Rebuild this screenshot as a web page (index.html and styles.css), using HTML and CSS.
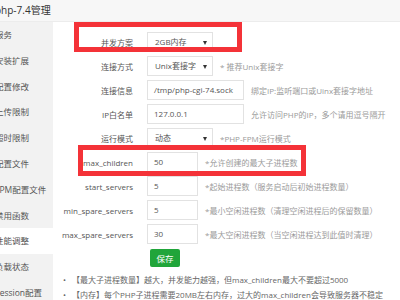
FILE: index.html
```html
<!DOCTYPE html>
<html lang="zh-CN">

<head>
    <meta charset="UTF-8">
    <title>php-7.4管理</title>
    <link rel="stylesheet" href="styles.css">
</head>

<body>
    <div class="title">php-7.4管理</div>

    <div class="main">
        <ul class="side">
            <li>服务</li>
            <li>安装扩展</li>
            <li>配置修改</li>
            <li>上传限制</li>
            <li>超时限制</li>
            <li>配置文件</li>
            <li>FPM配置文件</li>
            <li>禁用函数</li>
            <li class="on">性能调整</li>
            <li>负载状态</li>
            <li>Session配置</li>
        </ul>

        <div class="content">
            <div class="row">
                <span class="label">并发方案</span>
                <div class="field select w66">2GB内存</div>
            </div>
            <div class="row">
                <span class="label">连接方式</span>
                <div class="field select w66">Unix套接字</div>
                <span class="hint">* 推荐Unix套接字</span>
            </div>
            <div class="row">
                <span class="label">连接信息</span>
                <div class="field w97">/tmp/php-cgi-74.sock</div>
                <span class="hint">绑定IP:监听端口或Uinx套接字地址</span>
            </div>
            <div class="row">
                <span class="label">IP白名单</span>
                <div class="field w97">127.0.0.1</div>
                <span class="hint">允许访问PHP的IP，多个请用逗号隔开</span>
            </div>
            <div class="row">
                <span class="label">运行模式</span>
                <div class="field select w66">动态</div>
                <span class="hint">*PHP-FPM运行模式</span>
            </div>
            <div class="row">
                <span class="label">max_children</span>
                <div class="field w51">50</div>
                <span class="hint">*允许创建的最大子进程数</span>
            </div>
            <div class="row">
                <span class="label">start_servers</span>
                <div class="field w51">5</div>
                <span class="hint">*起始进程数（服务启动后初始进程数量）</span>
            </div>
            <div class="row">
                <span class="label">min_spare_servers</span>
                <div class="field w51">5</div>
                <span class="hint">*最小空闲进程数（清理空闲进程后的保留数量）</span>
            </div>
            <div class="row">
                <span class="label">max_spare_servers</span>
                <div class="field w51">30</div>
                <span class="hint">*最大空闲进程数（当空闲进程达到此值时清理）</span>
            </div>
            <div class="row">
                <span class="label"></span>
                <button class="save">保存</button>
            </div>

            <ul class="tips">
                <li>【最大子进程数量】越大，并发能力越强，但max_children最大不要超过5000</li>
                <li>【内存】每个PHP子进程需要20MB左右内存，过大的max_children会导致服务器不稳定</li>
            </ul>
        </div>
    </div>

    <!-- red annotation boxes -->
    <div class="mark mark-plan"></div>
    <div class="mark mark-children"></div>
</body>

</html>
```

FILE: styles.css
```css
body {
    margin: 0;
    width: 400px;
    height: 300px;
    overflow: hidden;
    position: relative;
    background: #fff;
    font-family: "Open Sans", "Noto Sans CJK SC", sans-serif;
    font-size: 8px;
    color: #555;
}

.title {
    height: 21px;
    line-height: 21px;
    background: #f7f7f7;
    border-bottom: 1px solid #ececec;
    font-size: 10px;
    color: #333;
    text-indent: -5px;
    white-space: nowrap;
}

.main {
    display: flex;
    height: 278px;
}

.side {
    margin: 0;
    padding: 0;
    list-style: none;
    width: 53px;
    flex: none;
    background: #f2f2f2;
    font-size: 8.5px;
    color: #555;
}

.side li {
    height: 25.8px;
    line-height: 25.8px;
    text-indent: -5px;
    white-space: nowrap;
    overflow: hidden;
}

.side li.on {
    background: #fff;
}

.content {
    flex: 1;
    padding-top: 10px;
}

.row {
    display: flex;
    align-items: center;
    height: 20px;
    margin-bottom: 4px;
}

.label {
    width: 80px;
    flex: none;
    text-align: right;
    margin-right: 14px;
    white-space: nowrap;
}

.field {
    height: 20px;
    box-sizing: border-box;
    border: 1px solid #e2e2e2;
    padding-left: 6px;
    line-height: 18px;
    white-space: nowrap;
    overflow: hidden;
}

.w51 {
    width: 51px;
}

.w66 {
    width: 66px;
}

.w97 {
    width: 97px;
}

.select {
    position: relative;
    padding-left: 7px;
}

.select::after {
    content: "";
    position: absolute;
    right: 5px;
    top: 8px;
    border-left: 2px solid transparent;
    border-right: 2px solid transparent;
    border-top: 4px solid #333;
}

.hint {
    margin-left: 7px;
    color: #9a9a9a;
    white-space: nowrap;
}

.save {
    margin-left: 3px;
    width: 30px;
    height: 18px;
    padding: 0;
    border: 0;
    border-radius: 2px;
    background: #20a53a;
    color: #fff;
    font-family: inherit;
    font-size: 8.5px;
}

.tips {
    margin: 0;
    padding: 0;
    list-style: none;
    color: #666;
    line-height: 15px;
}

.tips li {
    display: flex;
    white-space: nowrap;
}

.tips li::before {
    content: "•";
    flex: none;
    width: 9px;
    margin-left: 10px;
}

.mark {
    position: absolute;
    box-sizing: border-box;
    border: 5px solid #f43238;
}

.mark-plan {
    left: 74px;
    top: 22px;
    width: 168px;
    height: 30px;
}

.mark-children {
    left: 78px;
    top: 145px;
    width: 228px;
    height: 31px;
}
```
